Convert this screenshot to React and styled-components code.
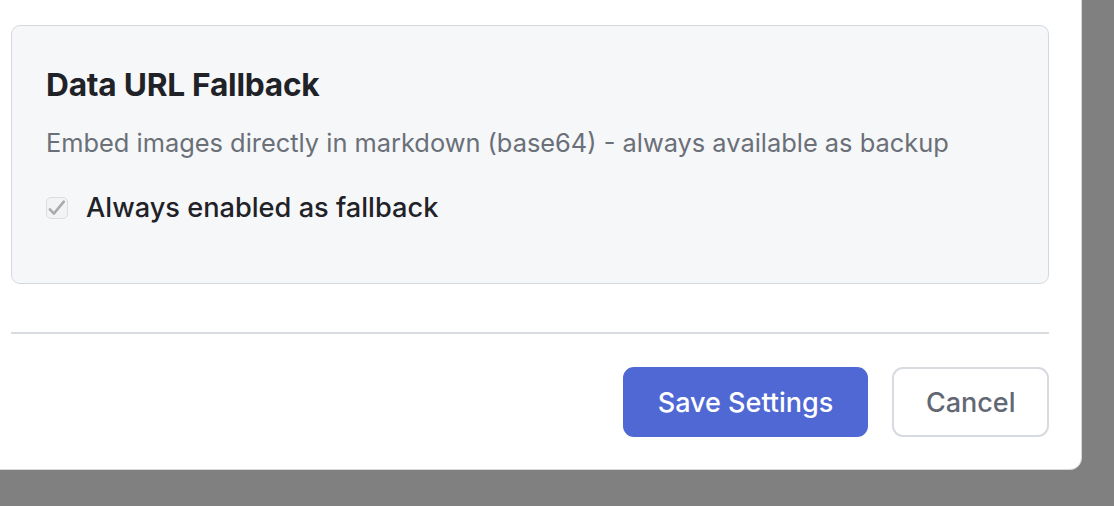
import React from "react";
import styled, { createGlobalStyle } from "styled-components";

const GlobalStyle = createGlobalStyle`
  html, body {
    margin: 0;
    padding: 0;
    background: #808080;
    overflow: hidden;
  }
  body {
    font-family: Inter, "Noto Sans", "Liberation Sans", sans-serif;
  }
`;

const Backdrop = styled.div`
  height: 506px;
  box-sizing: border-box;
  display: flex;
  flex-direction: column;
  justify-content: flex-end;
  padding: 0 32px 36px 0;
  background: #808080;
`;

const Modal = styled.div`
  margin-left: -22px;
  background: #ffffff;
  border: 1px solid #d6d8dc;
  border-radius: 12px;
  padding: 160px 32px 32px;
  display: flex;
  flex-direction: column;
  flex-shrink: 0;
`;

const Section = styled.section`
  background: #f6f7f9;
  border: 1.5px solid #d5d9df;
  border-radius: 9px;
  padding: 39px 34px 58px;
  display: flex;
  flex-direction: column;
`;

const SectionTitle = styled.h3`
  margin: 0;
  font-size: 31.7px;
  line-height: 40px;
  font-weight: 700;
  color: #1f2227;
  letter-spacing: -0.25px;
`;

const SectionText = styled.p`
  margin: 21px 0 0;
  font-size: 25.4px;
  line-height: 34px;
  color: #6a6f78;
`;

const CheckRow = styled.label`
  margin-top: 31px;
  display: flex;
  align-items: center;
  gap: 18px;
  font-size: 27.2px;
  line-height: 34px;
  font-weight: 500;
  color: #1f2227;
`;

const HiddenInput = styled.input`
  display: none;
`;

const CheckBox = styled.span`
  width: 22px;
  height: 22px;
  box-sizing: border-box;
  border: 1px solid #dcdde0;
  border-radius: 5px;
  background: #f2f3f4;
  display: flex;
  flex-shrink: 0;
  svg {
    display: block;
  }
`;

const Divider = styled.hr`
  margin: 48px 0 0;
  border: none;
  height: 2px;
  background: #d8dbe0;
`;

const Footer = styled.div`
  margin-top: 33px;
  display: flex;
  justify-content: flex-end;
  gap: 24px;
`;

const Button = styled.button`
  height: 70px;
  padding: 0 ${(p) => (p.$primary ? "33px" : "31.5px")};
  border-radius: 11px;
  font-family: inherit;
  font-size: 27px;
  font-weight: 500;
  cursor: pointer;
  border: 2px solid ${(p) => (p.$primary ? "#5068d4" : "#d7dbe0")};
  background: ${(p) => (p.$primary ? "#5068d4" : "#ffffff")};
  color: ${(p) => (p.$primary ? "#ffffff" : "#626873")};
`;

const App = () => {
  return (
    <>
      <GlobalStyle />
      <Backdrop>
        <Modal>
          <Section>
            <SectionTitle>Data URL Fallback</SectionTitle>
            <SectionText>
              Embed images directly in markdown (base64) - always available as backup
            </SectionText>
            <CheckRow>
              <HiddenInput type="checkbox" checked disabled readOnly />
              <CheckBox>
                <svg width="20" height="20" viewBox="1 1 20 20" fill="none">
                  <path
                    d="M3.9 12.4 L7.9 16.6 L17.8 4.6"
                    stroke="#a9aaac"
                    strokeWidth="2.5"
                    strokeLinecap="round"
                    strokeLinejoin="round"
                  />
                </svg>
              </CheckBox>
              Always enabled as fallback
            </CheckRow>
          </Section>
          <Divider />
          <Footer>
            <Button $primary>Save Settings</Button>
            <Button>Cancel</Button>
          </Footer>
        </Modal>
      </Backdrop>
    </>
  );
};

export default App;
